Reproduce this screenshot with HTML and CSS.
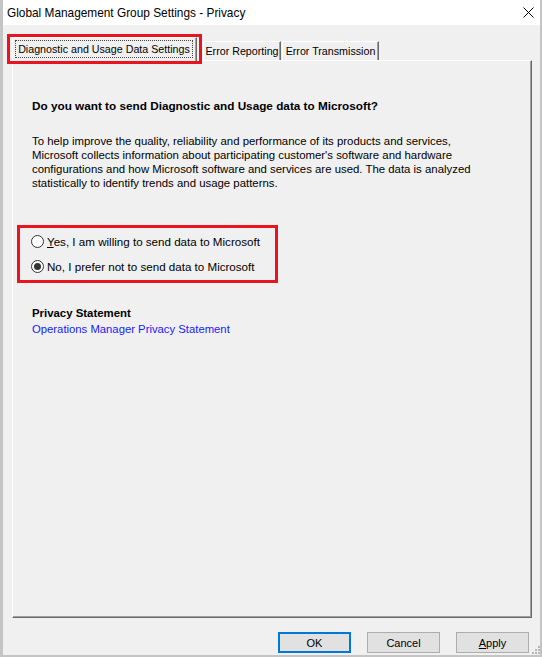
FILE: index.html
```html
<!DOCTYPE html>
<html>
<head>
<meta charset="utf-8">
<link rel="stylesheet" href="styles.css">
</head>
<body>
<div class="window">
  <div class="titlebar">
    <span class="title">Global Management Group Settings - Privacy</span>
    <svg class="close" width="11" height="11" viewBox="0 0 11 11"><path d="M0.5 0.5 L10.5 10.5 M10.5 0.5 L0.5 10.5" stroke="#000" stroke-width="1" fill="none"/></svg>
  </div>
  <div class="client">
    <div class="tabs">
      <div class="tab active"><span class="focus">Diagnostic and Usage Data Settings</span></div>
      <div class="tab tab-err">Error Reporting</div>
      <div class="tab tab-trans">Error Transmission</div>
      <div class="callout tab-callout"></div>
    </div>
    <div class="panel">
      <div class="heading">Do you want to send Diagnostic and Usage data to Microsoft?</div>
      <p class="desc">To help improve the quality, reliability and performance of its products and services,<br>Microsoft collects information about participating customer's software and hardware<br>configurations and how Microsoft software and services are used. The data is analyzed<br>statistically to identify trends and usage patterns.</p>
      <div class="options">
        <div class="option"><span class="radio"></span><span><u>Y</u>es, I am willing to send data to Microsoft</span></div>
        <div class="option"><span class="radio checked"></span><span>No, I prefer not to send data to Microsoft</span></div>
        <div class="callout option-callout"></div>
      </div>
      <div class="privacy-title">Privacy Statement</div>
      <a class="link">Operations Manager Privacy Statement</a>
    </div>
    <div class="buttons">
      <div class="btn default">OK</div>
      <div class="btn">Cancel</div>
      <div class="btn"><u>A</u>pply</div>
    </div>
  </div>
  <svg class="grip" width="8" height="8" viewBox="0 0 8 8">
    <rect x="6" y="0" width="2" height="2" fill="#b8b8b8"/>
    <rect x="3" y="3" width="2" height="2" fill="#b8b8b8"/>
    <rect x="6" y="3" width="2" height="2" fill="#b8b8b8"/>
    <rect x="0" y="6" width="2" height="2" fill="#b8b8b8"/>
    <rect x="3" y="6" width="2" height="2" fill="#b8b8b8"/>
    <rect x="6" y="6" width="2" height="2" fill="#b8b8b8"/>
  </svg>
</div>
</body>
</html>
```

FILE: styles.css
```css
html, body {
  margin: 0;
  padding: 0;
  background: #ffffff;
}

.window {
  position: relative;
  box-sizing: border-box;
  width: 542px;
  height: 657px;
  border-left: 3px solid #c4c4c4;
  border-right: 2px solid #c4c4c4;
  border-bottom: 2px solid #c4c4c4;
  display: flex;
  flex-direction: column;
  font-family: "Liberation Sans", Arial, sans-serif;
  color: #000;
}

.titlebar {
  height: 25px;
  flex: none;
  background: #ffffff;
  display: flex;
  align-items: center;
  padding-left: 4px;
}

.title {
  font-size: 11.85px;
  line-height: 16px;
}

.close {
  margin-left: auto;
  margin-right: 6px;
}

.client {
  flex: 1;
  background: #f0f0f0;
  display: flex;
  flex-direction: column;
  padding: 12px 8px 2px 9px;
}

.tabs {
  position: relative;
  display: flex;
  align-items: flex-end;
  height: 23px;
  flex: none;
}

.tab {
  box-sizing: border-box;
  height: 19px;
  border-top: 1px solid #ffffff;
  border-left: 1px solid #ffffff;
  border-right: 1px solid #696969;
  box-shadow: inset -1px 0 0 #a0a0a0;
  background: #f0f0f0;
  font-size: 10.7px;
  display: flex;
  align-items: center;
  justify-content: center;
  white-space: nowrap;
}

.tab.active {
  width: 185px;
  height: 24px;
  margin-bottom: -1px;
  position: relative;
  z-index: 1;
  padding: 2px 3px 3px 2px;
}

.focus {
  flex: 1;
  align-self: stretch;
  border: 1px dotted #444;
  display: flex;
  align-items: center;
  justify-content: center;
}

.tab-err {
  width: 78px;
  margin-left: 6px;
}

.tab-trans {
  width: 97px;
  margin-left: 1px;
}

.callout {
  position: absolute;
  box-sizing: border-box;
  border: 3px solid #e8141e;
  z-index: 2;
}

.tab-callout {
  left: -5px;
  top: -3px;
  width: 195px;
  height: 30px;
}

.panel {
  flex: 1;
  box-sizing: border-box;
  border: 1px solid;
  border-color: #ffffff #696969 #696969 #ffffff;
  box-shadow: inset -1px -1px 0 #a0a0a0;
  padding: 38px 0 0 19px;
  font-size: 11.4px;
  line-height: 14px;
}

.heading {
  font-weight: bold;
  font-size: 11.75px;
  line-height: 14px;
}

.desc {
  margin: 21px 0 0 0;
  white-space: nowrap;
}

.options {
  position: relative;
  margin-top: 43px;
  display: flex;
  flex-direction: column;
  gap: 8px;
  font-size: 11.6px;
}

.option {
  display: flex;
  align-items: center;
  height: 17px;
  gap: 3px;
  margin-left: -1px;
}

.radio {
  box-sizing: border-box;
  width: 13px;
  height: 13px;
  border-radius: 50%;
  border: 1px solid #333333;
  background: #ffffff;
  display: flex;
  align-items: center;
  justify-content: center;
}

.radio.checked::after {
  content: "";
  width: 7px;
  height: 7px;
  border-radius: 50%;
  background: #333333;
}

.option-callout {
  left: -15px;
  top: -8px;
  width: 261px;
  height: 58px;
}

.privacy-title {
  margin-top: 31px;
  font-weight: bold;
}

.link {
  display: block;
  margin-top: 2px;
  color: #1a1aff;
  font-size: 11.3px;
}

.buttons {
  flex: none;
  display: flex;
  justify-content: flex-end;
  gap: 16px;
  margin-top: 14px;
  margin-right: 3px;
}

.btn {
  box-sizing: border-box;
  width: 73px;
  height: 21px;
  background: #e1e1e1;
  border: 1px solid #adadad;
  font-size: 11px;
  display: flex;
  align-items: center;
  justify-content: center;
}

.btn.default {
  border: 2px solid #0078d7;
}

.grip {
  position: absolute;
  right: 0px;
  bottom: 1px;
}
```
